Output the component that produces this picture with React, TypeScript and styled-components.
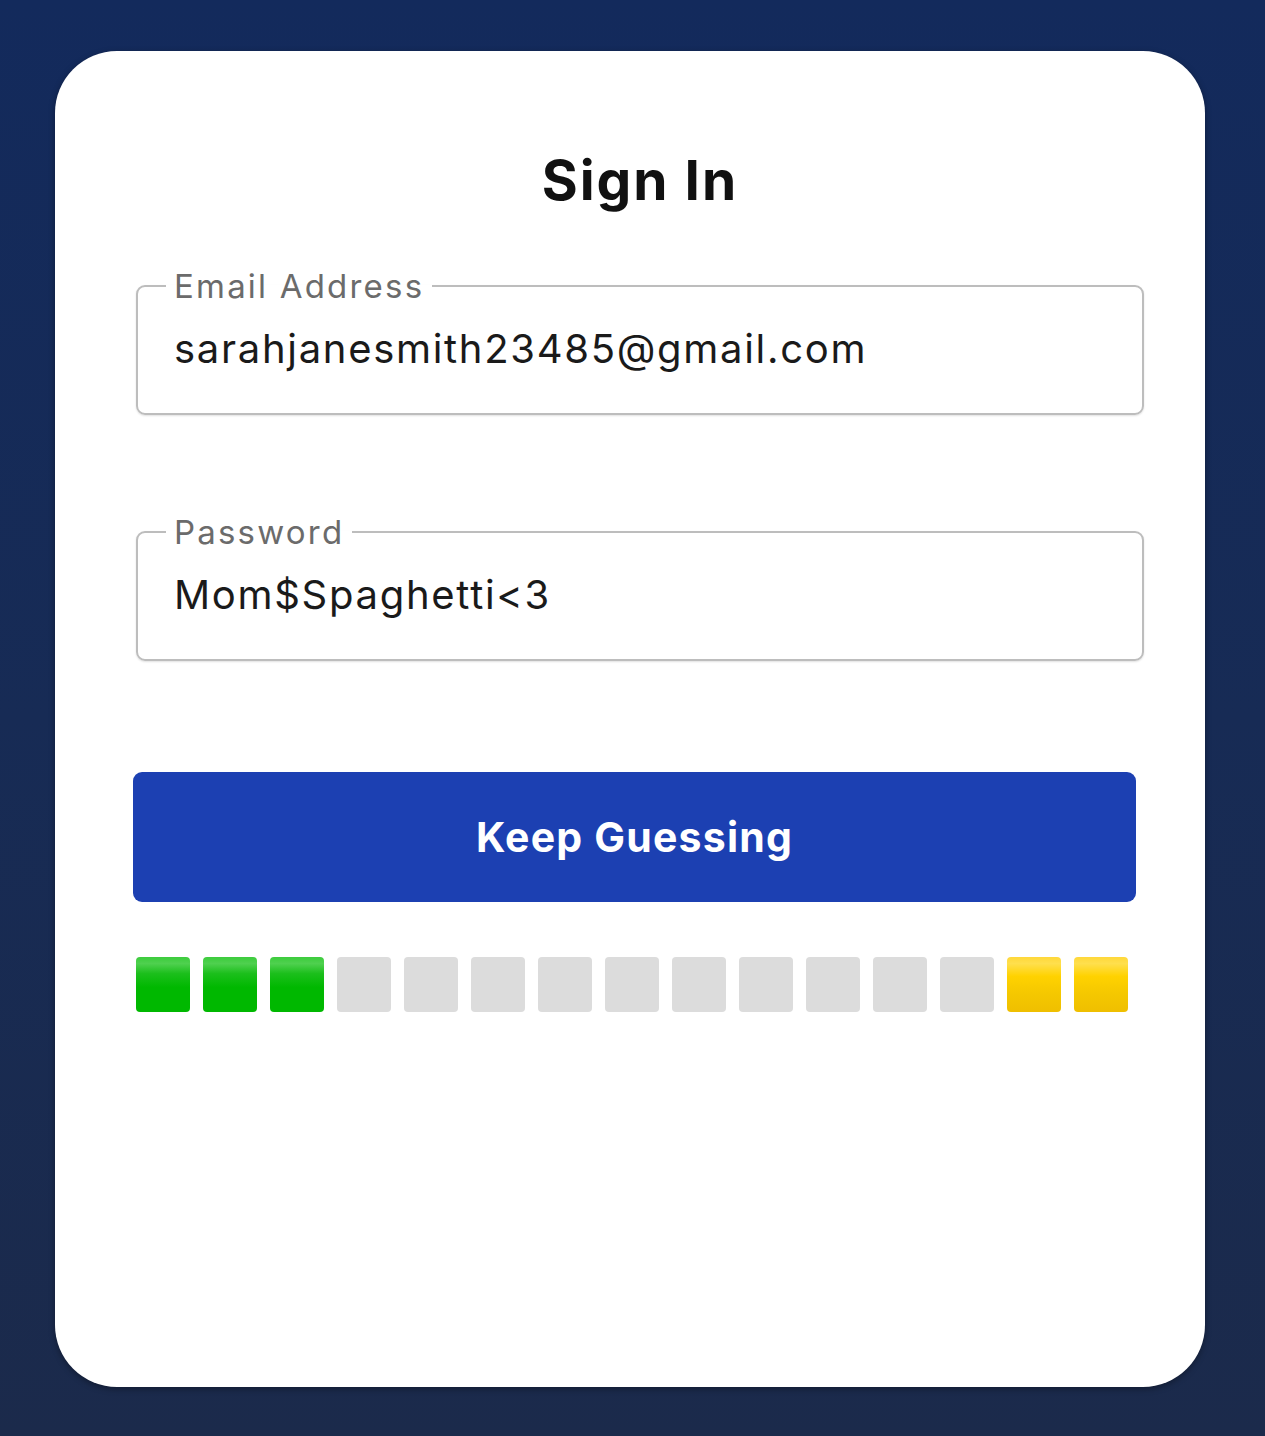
import React from "react";
import styled, { createGlobalStyle } from "styled-components";

const Global = createGlobalStyle`
  html, body { margin: 0; padding: 0; }
  body {
    background: linear-gradient(180deg, #132a5c 0%, #172b55 50%, #1b2a4b 100%);
    min-height: 1436px;
    font-family: Inter, "Noto Sans", sans-serif;
  }
`;

const Page = styled.div`
  width: 1265px;
  height: 1436px;
  padding: 51px 60px 0 55px;
  box-sizing: border-box;
`;

const Card = styled.div`
  width: 1150px;
  height: 1336px;
  background: #ffffff;
  border-radius: 62px;
  box-sizing: border-box;
  padding: 96px 61px 0 78px;
  display: flex;
  flex-direction: column;
  box-shadow: 0 2px 6px rgba(0, 0, 0, 0.35);
`;

const Title = styled.h1`
  margin: 0 0 56px 0;
  text-align: center;
  font-size: 55px;
  line-height: 66px;
  font-weight: 700;
  color: #111111;
  letter-spacing: 2px;
  padding-left: 3px;
`;

const Field = styled.fieldset<{ $gapAfter: number }>`
  margin: 0 0 ${(p) => p.$gapAfter}px 3px;
  border: 2px solid #bdbdbd;
  border-radius: 9px;
  padding: 0 36px;
  height: 146px;
  box-sizing: border-box;
  box-shadow: 0 1px 2px rgba(0, 0, 0, 0.12);
`;

const Legend = styled.legend`
  margin-left: -8px;
  padding: 0 8px;
  font-size: 33px;
  line-height: 34px;
  color: #6b6b6b;
  letter-spacing: 2.2px;
`;

const Value = styled.div`
  font-size: 40px;
  line-height: 48px;
  color: #1a1a1a;
  margin-top: 22px;
  letter-spacing: 1.7px;
`;

const Button = styled.button`
  width: 1003px;
  height: 130px;
  border: none;
  border-radius: 9px;
  background: #1c40b2;
  color: #ffffff;
  font-family: Inter, "Noto Sans", sans-serif;
  font-size: 41px;
  font-weight: 700;
  letter-spacing: 1.2px;
  margin: 0 0 55px 0;
  padding: 0;
  display: flex;
  align-items: center;
  justify-content: center;
`;

const Squares = styled.div`
  display: flex;
  gap: 13px;
  margin-left: 3px;
`;

const Square = styled.div<{ $kind: "green" | "gray" | "yellow" }>`
  width: 54px;
  height: 55px;
  border-radius: 4px;
  background: ${(p) =>
    p.$kind === "green"
      ? "linear-gradient(180deg, #3ccc3c 0%, #4fd04f 12%, #1cbf1c 30%, #00b800 55%, #00b800 100%)"
      : p.$kind === "yellow"
      ? "linear-gradient(180deg, #ffd83a 0%, #ffdf4d 12%, #ffd200 35%, #f5c800 65%, #efbf00 100%)"
      : "#dcdcdc"};
`;

const pattern: Array<"green" | "gray" | "yellow"> = [
  "green", "green", "green",
  "gray", "gray", "gray", "gray", "gray", "gray", "gray", "gray", "gray", "gray",
  "yellow", "yellow",
];

export default function App() {
  return (
    <>
      <Global />
      <Page>
        <Card>
          <Title>Sign In</Title>
          <Field $gapAfter={100}>
            <Legend>Email Address</Legend>
            <Value>sarahjanesmith23485@gmail.com</Value>
          </Field>
          <Field $gapAfter={111}>
            <Legend>Password</Legend>
            <Value>Mom$Spaghetti&lt;3</Value>
          </Field>
          <Button>Keep Guessing</Button>
          <Squares>
            {pattern.map((k, i) => (
              <Square key={i} $kind={k} />
            ))}
          </Squares>
        </Card>
      </Page>
    </>
  );
}
